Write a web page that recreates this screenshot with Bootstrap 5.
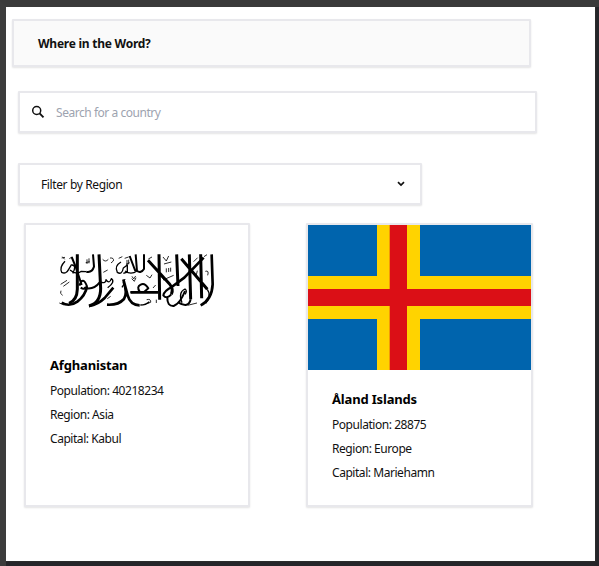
<!DOCTYPE html>
<html lang="en">
<head>
<meta charset="utf-8">
<meta name="viewport" content="width=device-width, initial-scale=1">
<title>Where in the Word?</title>
<link href="https://cdn.jsdelivr.net/npm/bootstrap@5.3.0/dist/css/bootstrap.min.css" rel="stylesheet">
<style>
html,body{height:100%}
body{background:#252529;font-family:"Noto Sans","Open Sans",sans-serif;font-size:12px;line-height:24px;color:#111;overflow:hidden;border-top:7px solid #3a3a3a;border-left:6px solid #3c3c3c}
.page{width:589px;height:554px;background:#fff;padding-top:12px;box-shadow:0 0 0 1px #2b2b2b}
.panel{border:2px solid #e8e8ec;border-radius:1px;box-shadow:0 1px 2px #0000001c;background:#fff}
.title-bar{width:519px;height:48px;margin-left:6px;background:#fafafa;padding:2px 0 0 24px}
.title-bar h1{font-size:12px;font-weight:700;letter-spacing:-.25px}
.search-bar{width:519px;height:42px;margin:24px 0 0 12px;padding-left:11px}
.search-bar input{width:300px;padding:2px 0 0;margin-left:11px;border:0;background:none;font-size:12px;letter-spacing:-.46px;outline:0}
.search-bar input::placeholder{color:#9da3af;opacity:1}
.region-filter{width:404px;height:42px;margin:30px 0 0 12px;padding:0 15px 0 21px;color:#111;font-size:12px;letter-spacing:-.38px}
.region-filter span{padding-top:2px}
.countries{margin:18px 0 0 18px;gap:56px}
.country{width:226px;height:284px}
.country + .country{width:227px}
.country svg{display:block;width:100%}
.country-info{padding:17px 24px 0}
.country h2{font-size:13px;font-weight:700;line-height:24px;letter-spacing:-.17px;margin:0 0 2px;color:#000}
.country p{margin:0;letter-spacing:-.45px;color:#111}
</style>
<script src="https://cdn.jsdelivr.net/npm/bootstrap@5.3.0/dist/js/bootstrap.bundle.min.js"></script>
</head>
<body>
<main class="page">
  <header class="panel title-bar d-flex align-items-center"><h1 class="m-0">Where in the Word?</h1></header>
  <div class="panel search-bar d-flex align-items-center">
    <svg width="14" height="14" viewBox="0 0 14 14" fill="none" stroke="#111" stroke-width="1.5"><circle cx="5.7" cy="5.5" r="4"/><path d="M8.6 8.4 12.5 12.3" stroke-width="1.9"/></svg>
    <input type="text" placeholder="Search for a country" aria-label="Search for a country">
  </div>
  <button type="button" class="panel region-filter d-flex align-items-center justify-content-between">
    <span>Filter by Region</span>
    <svg width="8" height="6" viewBox="0 0 8 6" fill="none" stroke="#111" stroke-width="1.7"><path d="m1 1.2 3 2.8 3-2.8"/></svg>
  </button>
  <section class="countries d-flex">
    <article class="panel country">
      <svg viewBox="26 225 222 111" height="111" role="img" aria-label="Flag of Afghanistan" fill="none" stroke="#000" stroke-linejoin="round">
        <g transform="translate(55 245) scale(.3333)">
          <path stroke-width="9" d="M67 28V133Q66 166 42 175M132 28 137 130Q137 174 102 183M312 28 314 164M365 28 369 123M403 28 407 163M437 28 440 160M279 46 343 116Q357 133 349 148M379 41 457 133"/>
          <path stroke-width="8" d="M470 28 473 118Q471 163 437 181M446 38 388 98 350 126M20 173Q43 187 67 170 91 151 96 125M102 183Q130 178 149 159L175 128M156 179Q190 181 207 162 218 145 206 110M205 103 218 151Q226 180 254 181M227 142H309"/>
          <path stroke-width="6" d="M50 36 63 68 80 120M114 28 117 65Q111 84 94 80M242 28 246 78M267 28V72Q258 86 246 78M224 33 241 78M349 148Q335 164 325 151 327 138 350 126M337 157Q336 184 356 183 376 175 390 138M369 172Q401 191 407 163M226 142 254 140Q244 125 257 119 269 112 280 130L268 140M73 122Q84 91 96 124 89 136 77 128M87 128Q115 137 134 112"/>
          <path stroke-width="4" d="M30 49Q13 66 20 82 33 89 41 73L50 58M45 75Q64 91 79 79L94 80M51 60Q66 61 53 85M198 51Q177 63 187 82 201 91 205 69L217 60 217 81 205 85M210 78Q228 91 246 78M135 111Q153 117 153 104 163 119 169 101 182 110 158 128M201 127 209 114M381 173Q369 141 390 132 398 138 390 148M457 133Q470 151 452 175M256 180Q273 180 283 170"/>
          <path stroke-width="2.5" d="M20 39 30 37M22 35 29 43M43 41 51 36M17 118 36 106M25 124 43 111M23 151Q13 146 18 137M13 174 27 180M92 53 104 50M96 43V57M102 40V55M143 43Q151 53 160 43M165 39Q178 38 175 48L168 54M157 161 167 154M145 82 158 75M191 40 202 35M209 40 221 36M213 58 224 53M216 45V60M221 44V58M231 94 236 102 242 93M204 111 211 102M324 36 334 48 341 33M327 57 349 51M334 70V82M341 69V81M347 68V80M324 105 356 91M319 96 328 106M280 42 291 36M274 91 285 99 291 89M294 129 302 120M275 164Q289 161 287 172L276 176M304 164V174M413 81 424 90 427 77M451 79Q463 75 458 91M416 50 428 38M447 35 456 29M398 181 426 174M230 101 238 109 243 98"/>
        </g>
      </svg>
      <div class="country-info">
        <h2>Afghanistan</h2>
        <p>Population: 40218234</p>
        <p>Region: Asia</p>
        <p>Capital: Kabul</p>
      </div>
    </article>
    <article class="panel country">
      <svg viewBox="0 0 223 145" height="145" preserveAspectRatio="none" role="img" aria-label="Flag of Åland Islands"><path fill="#0064ad" d="M0 0h223v145H0z"/><path fill="#ffd300" d="M69 0h43v145H69zM0 51h223v43H0z"/><path fill="#db0f16" d="M81.7 0h17.3v145H81.7zM0 64h223v17H0z"/></svg>
      <div class="country-info">
        <h2>Åland Islands</h2>
        <p>Population: 28875</p>
        <p>Region: Europe</p>
        <p>Capital: Mariehamn</p>
      </div>
    </article>
  </section>
</main>
</body>
</html>
